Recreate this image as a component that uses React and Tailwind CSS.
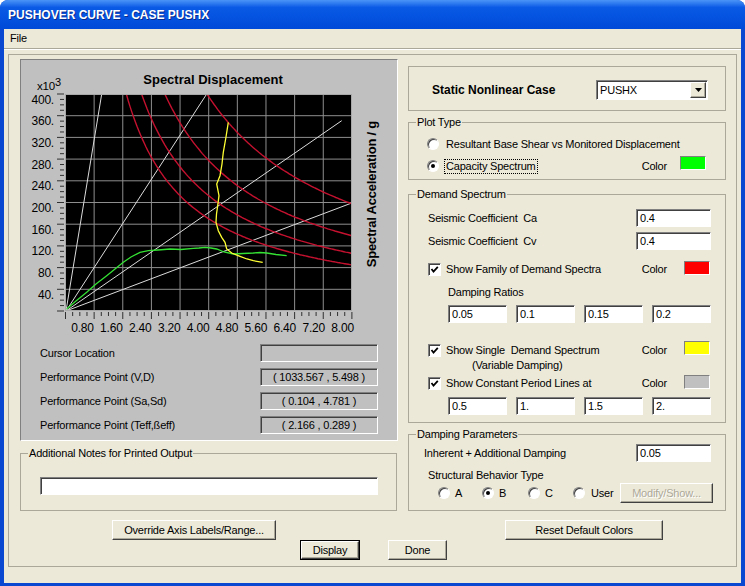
import React from "react";

const ui = "font-['Liberation_Sans',Arial,sans-serif] text-[11px] tracking-[-0.2px] text-black";
const sunken = "border border-t-[#808080] border-l-[#808080] border-r-white border-b-white shadow-[inset_1px_1px_0_#404040]";
const raised = "border border-t-white border-l-white border-r-[#404040] border-b-[#404040] shadow-[inset_-1px_-1px_0_#aca899]";
const etched = "border border-[#aca899]";

const Field = ({ value, className = "" }) => (
  <div className={`${sunken} bg-white h-[18px] flex items-center pl-[3px] ${className}`}>{value}</div>
);

const Radio = ({ checked }) => (
  <span className="w-[12px] h-[12px] rounded-full bg-white border border-t-[#808080] border-l-[#808080] border-r-white border-b-white shadow-[inset_1px_1px_0_#404040] flex items-center justify-center shrink-0">
    {checked && <span className="w-[4px] h-[4px] rounded-full bg-black" />}
  </span>
);

const Check = () => (
  <span className={`w-[13px] h-[13px] bg-white ${sunken} flex items-center justify-center shrink-0`}>
    <svg width="9" height="9" viewBox="0 0 9 9">
      <path d="M1.5 4 L3.5 6.5 L7.8 1.8" fill="none" stroke="black" strokeWidth="1.8" />
    </svg>
  </span>
);

const Swatch = ({ color }) => (
  <span className={`w-[26px] h-[14px] border border-t-[#808080] border-l-[#808080] border-r-white border-b-white ${color}`} />
);

const Group = ({ title, className = "", children }) => (
  <fieldset className={`${etched} ${className}`}>
    <legend className="ml-[7px] px-[1px] leading-[13px]">{title}</legend>
    {children}
  </fieldset>
);

const Button = ({ children, className = "" }) => (
  <button type="button" className={`${raised} bg-[#ece9d8] h-[20px] flex items-center justify-center ${className}`}>
    {children}
  </button>
);

// chart scale, real page coordinates
const sx = (d) => 65.5 + d * 35.8;
const sy = (a) => 312 - a * 0.5425;

const green = [
  [66.7, 310], [76, 302], [86.7, 293.3], [96, 285], [106.7, 276.7], [115, 270], [123.3, 263.3],
  [131, 258], [140, 253.3], [148.3, 251.7], [158, 251], [170, 250], [181, 250.5], [193.3, 249.3],
  [199, 249], [205, 248.3], [211, 249], [216.7, 250], [224, 253], [233.3, 255], [243, 254.5],
  [253.3, 254], [260, 253.5], [266.7, 254], [276, 255.5], [286.7, 256.7],
];

const yellow = [
  [228.3, 123.3], [226, 138], [223.3, 153.3], [222, 165], [220, 176.7], [216.7, 185], [219, 196.7],
  [217.7, 206.7], [216.5, 215], [216, 223.3], [218.3, 231.7], [221.7, 238.3], [225, 243.3],
  [226.7, 250], [231.7, 254], [240, 257.3], [247, 260], [253.3, 261.7], [262.7, 263.3],
];

const toPts = (arr) => arr.map(([x, y]) => `${x},${y}`).join(" ");

function Chart() {
  const curves = [680, 850, 1110, 1580].map((k) => {
    const pts = [];
    for (let d = k / 400; d <= 8.05; d += 0.05) pts.push(`${sx(d).toFixed(1)},${sy(k / d).toFixed(1)}`);
    return pts.join(" ");
  });
  const periods = [[101.7, 95], [206.7, 95], [341.7, 121.7], [351.7, 204]];
  const lbl = "'Liberation Sans Narrow','Liberation Sans',Arial,sans-serif";

  return (
    <svg width="376" height="252" viewBox="21 86 376 252" overflow="visible" className="block">
      <defs>
        <clipPath id="plot">
          <rect x="65" y="95" width="287" height="217" />
        </clipPath>
      </defs>
      <rect x="65" y="95" width="287" height="217" fill="black" />
      <g stroke="#8e8e8e" strokeWidth="1">
        {[1, 2, 3, 4, 5, 6, 7, 8, 9].map((k) => (
          <line key={`v${k}`} x1={sx(0.8 * k)} y1="95" x2={sx(0.8 * k)} y2="312" />
        ))}
        {[1, 2, 3, 4, 5, 6, 7, 8, 9].map((k) => (
          <line key={`h${k}`} x1="65" y1={sy(40 * k)} x2="352" y2={sy(40 * k)} />
        ))}
      </g>
      <g clipPath="url(#plot)" fill="none">
        {periods.map(([x, y], i) => (
          <line key={i} x1="66" y1="312" x2={x} y2={y} stroke="#dcdcdc" strokeWidth="1" />
        ))}
        {curves.map((p, i) => (
          <polyline key={i} points={p} stroke="#c4112f" strokeWidth="1.4" />
        ))}
        <polyline points={toPts(green)} stroke="#34e234" strokeWidth="1.3" />
        <polyline points={toPts(yellow)} stroke="#ffff33" strokeWidth="1.3" />
      </g>
      <rect x="65.5" y="95.5" width="286" height="216" fill="none" stroke="#a8a8a8" />
      <g stroke="#303030" strokeWidth="1">
        {Array.from({ length: 41 }, (_, i) => (
          <line key={`yt${i}`} x1={i % 4 === 0 ? 57 : 60} y1={sy(i * 10)} x2="64" y2={sy(i * 10)} />
        ))}
        {Array.from({ length: 41 }, (_, i) => (
          <line key={`xt${i}`} x1={sx(i * 0.2)} y1="313" x2={sx(i * 0.2)} y2={i % 4 === 0 ? 320 : 317} />
        ))}
      </g>
      <g fontFamily={lbl} fontSize="12" fill="black">
        <text x="37" y="90.5" fontSize="11.5">
          x10<tspan dy="-4" fontSize="11">3</tspan>
        </text>
        {[1, 2, 3, 4, 5, 6, 7, 8, 9, 10].map((k) => (
          <text key={`yl${k}`} x="54" y={sy(40 * k) + 9.5} textAnchor="end">
            {`${40 * k}.`}
          </text>
        ))}
        {[1, 2, 3, 4, 5, 6, 7, 8, 9, 10].map((k) => (
          <text key={`xl${k}`} x={82.5 + 28.9 * (k - 1)} y="333" textAnchor="middle">
            {(0.8 * k).toFixed(2)}
          </text>
        ))}
      </g>
      <text
        x="371"
        y="195"
        transform="rotate(-90 371 195)"
        textAnchor="middle"
        dominantBaseline="central"
        fontFamily="'Liberation Sans',Arial,sans-serif"
        fontWeight="bold"
        fontSize="13"
        fill="black"
      >
        Spectral Acceleration / g
      </text>
    </svg>
  );
}

const ReadRow = ({ label, value }) => (
  <div className="flex items-center h-[18px]">
    <span className="pl-[19px]">{label}</span>
    <div className={`${sunken} ml-auto mr-[19px] w-[118px] h-[18px] bg-[#c0c0c0] flex items-center justify-center`}>{value}</div>
  </div>
);

export default function App() {
  return (
    <div className={`w-[745px] h-[586px] bg-white ${ui}`}>
      <div className="w-full h-full rounded-t-[8px] bg-[#0a48d2] flex flex-col overflow-hidden">
        {/* title bar */}
        <div className="h-[29px] shrink-0 bg-linear-to-b from-[#4a94f7] from-0% via-[#0a5ae6] via-25% to-[#004ad8] flex items-center pl-[8px]">
          <span className="text-white font-bold text-[12px] tracking-normal [text-shadow:1px_1px_0_#0a2a8c]">
            PUSHOVER CURVE - CASE PUSHX
          </span>
        </div>

        <div className="mx-[4px] mb-[3px] flex-1 bg-[#ece9d8] flex flex-col">
          {/* menu */}
          <div className="h-[20px] flex items-center pl-[6px] border-b border-[#aca899] shadow-[0_1px_0_white]">File</div>

          {/* main frame */}
          <div className={`${etched} ml-[4px] mt-[5px] w-[729px] h-[513px] flex flex-col`}>
            <div className="flex items-start">
              {/* left column */}
              <div className="ml-[11px] mt-[4px] w-[378px] flex flex-col">
                <div className="h-[382px] bg-[#c0c0c0] border border-t-[#808080] border-l-[#808080] border-r-white border-b-white flex flex-col">
                  <div className="h-[25px] pt-[12px] pl-[8px] text-center font-bold text-[13px] leading-[15px] tracking-normal">
                    Spectral Displacement
                  </div>
                  <Chart />
                  <div className="mt-[7px] flex flex-col gap-[6px]">
                    <ReadRow label="Cursor Location" value="" />
                    <ReadRow label="Performance Point (V,D)" value="( 1033.567 , 5.498 )" />
                    <ReadRow label="Performance Point (Sa,Sd)" value="( 0.104 , 4.781 )" />
                    <ReadRow label="Performance Point (Teff,ßeff)" value="( 2.166 , 0.289 )" />
                  </div>
                </div>

                <Group title="Additional Notes for Printed Output" className="mt-[6px] w-[377px] pb-[15px]">
                  <Field value="" className="mt-[17px] ml-[19px] w-[338px]" />
                </Group>

                <Button className="mt-[9px] ml-[92px] w-[164px]">Override Axis Labels/Range...</Button>
              </div>

              {/* right column */}
              <div className="ml-[10px] mt-[11px] w-[318px] flex flex-col">
                <div className={`${etched} h-[45px] flex items-center justify-between pt-[3px] pl-[23px] pr-[17px]`}>
                  <span className="font-bold text-[12px] tracking-normal">Static Nonlinear Case</span>
                  <div className={`${sunken} bg-white w-[112px] h-[20px] flex items-center pl-[3px] pr-[1px]`}>
                    <span>PUSHX</span>
                    <span className={`${raised} ml-auto w-[16px] h-[16px] bg-[#ece9d8] flex items-center justify-center`}>
                      <svg width="7" height="4" viewBox="0 0 7 4">
                        <polygon points="0,0 7,0 3.5,4" fill="black" />
                      </svg>
                    </span>
                  </div>
                </div>

                <Group title="Plot Type" className="mt-[5px] pt-[7px] pb-[5px]">
                  <div className="flex items-center h-[16px] pl-[18px] gap-[7px]">
                    <Radio />
                    <span>Resultant Base Shear vs Monitored Displacement</span>
                  </div>
                  <div className="flex items-center h-[16px] pl-[18px] mt-[6px]">
                    <Radio checked />
                    <span className="ml-[6px] px-[1px] outline-1 outline-dotted outline-black leading-[13px]">Capacity Spectrum</span>
                    <span className="ml-auto">Color</span>
                    <span className="ml-[13px] mr-[19px] -mt-[6px] flex">
                      <Swatch color="bg-[#00ff00]" />
                    </span>
                  </div>
                </Group>

                <Group title="Demand Spectrum" className="mt-[8px] pb-[7px]">
                  <div className="flex items-center h-[18px] mt-[8px] pl-[19px] pr-[14px]">
                    <span className="whitespace-pre">Seismic Coefficient  Ca</span>
                    <Field value="0.4" className="ml-auto w-[75px]" />
                  </div>
                  <div className="flex items-center h-[18px] mt-[5px] pl-[19px] pr-[14px]">
                    <span className="whitespace-pre">Seismic Coefficient  Cv</span>
                    <Field value="0.4" className="ml-auto w-[75px]" />
                  </div>
                  <div className="flex items-center h-[16px] mt-[11px] pl-[19px] pr-[15px]">
                    <Check />
                    <span className="ml-[5px]">Show Family of Demand Spectra</span>
                    <span className="ml-auto">Color</span>
                    <span className="ml-[17px] -mt-[2px] flex">
                      <Swatch color="bg-[#ff0000]" />
                    </span>
                  </div>
                  <div className="mt-[8px] pl-[39px] leading-[14px]">Damping Ratios</div>
                  <div className="flex gap-[9px] mt-[6px] pl-[39px]">
                    {["0.05", "0.1", "0.15", "0.2"].map((v) => (
                      <Field key={v} value={v} className="w-[59px]" />
                    ))}
                  </div>
                  <div className="flex items-center h-[16px] mt-[19px] pl-[19px] pr-[15px]">
                    <Check />
                    <span className="ml-[5px] whitespace-pre">Show Single  Demand Spectrum</span>
                    <span className="ml-auto">Color</span>
                    <span className="ml-[17px] -mt-[4px] flex">
                      <Swatch color="bg-[#ffff00]" />
                    </span>
                  </div>
                  <div className="pl-[63px] leading-[14px]">(Variable Damping)</div>
                  <div className="flex items-center h-[16px] mt-[3px] pl-[19px] pr-[15px]">
                    <Check />
                    <span className="ml-[5px]">Show Constant Period Lines at</span>
                    <span className="ml-auto">Color</span>
                    <span className="ml-[17px] -mt-[3px] flex">
                      <Swatch color="bg-[#c0c0c0]" />
                    </span>
                  </div>
                  <div className="flex gap-[9px] mt-[6px] pl-[39px]">
                    {["0.5", "1.", "1.5", "2."].map((v) => (
                      <Field key={v} value={v} className="w-[59px]" />
                    ))}
                  </div>
                </Group>

                <Group title="Damping Parameters" className="mt-[5px] pb-[7px]">
                  <div className="flex items-center h-[18px] mt-[3px] pl-[15px] pr-[14px]">
                    <span>Inherent + Additional Damping</span>
                    <Field value="0.05" className="ml-auto w-[75px]" />
                  </div>
                  <div className="mt-[6px] pl-[19px] leading-[14px]">Structural Behavior Type</div>
                  <div className="flex items-center h-[20px] mt-[1px] pl-[29px] pr-[12px]">
                    <span className="w-[44px] flex items-center gap-[5px]"><Radio /><span>A</span></span>
                    <span className="w-[46px] flex items-center gap-[5px]"><Radio checked /><span>B</span></span>
                    <span className="w-[45px] flex items-center gap-[5px]"><Radio /><span>C</span></span>
                    <span className="flex items-center gap-[6px]"><Radio /><span>User</span></span>
                    <Button className="ml-auto w-[93px] text-[#aca899] [text-shadow:1px_1px_0_white]">Modify/Show...</Button>
                  </div>
                </Group>

                <Button className="mt-[9px] ml-[97px] w-[158px]">Reset Default Colors</Button>
              </div>
            </div>

            <div className="flex items-start">
              <div className="ml-[291px] w-[60px] h-[20px] border border-black flex">
                <Button className="w-full h-full">Display</Button>
              </div>
              <Button className="ml-[28px] w-[59px]">Done</Button>
            </div>
          </div>
        </div>
      </div>
    </div>
  );
}
